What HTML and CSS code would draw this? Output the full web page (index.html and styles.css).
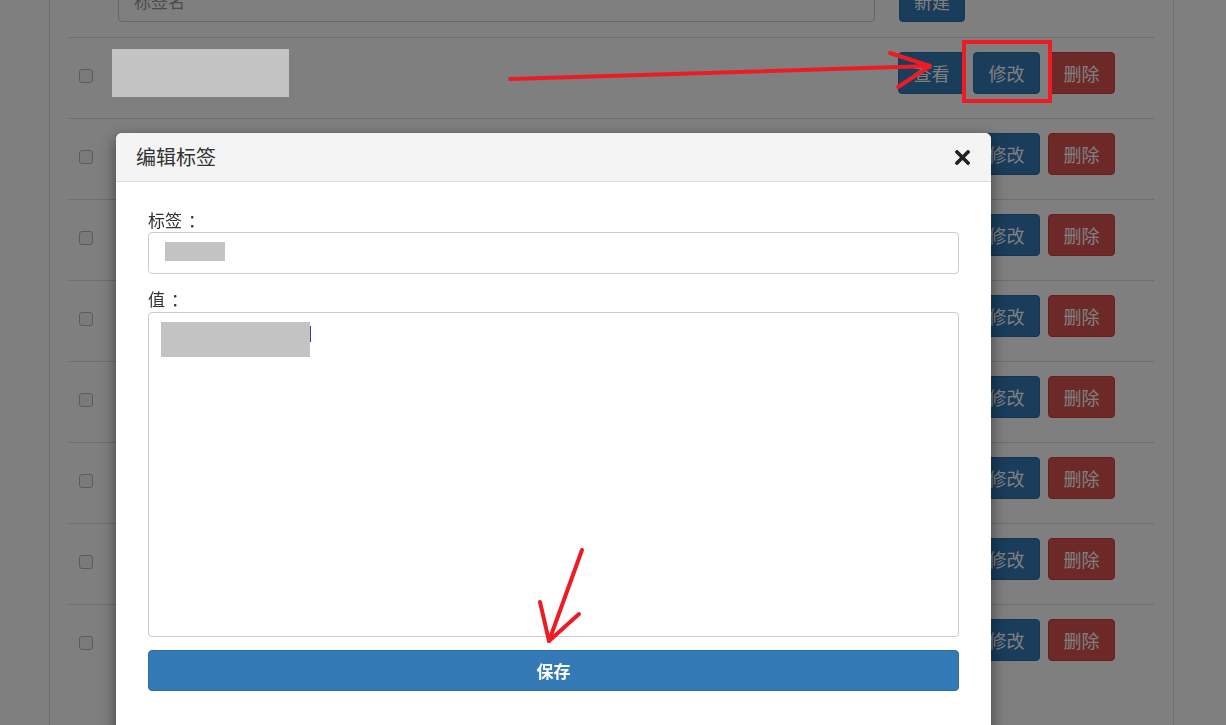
FILE: index.html
```html
<!DOCTYPE html>
<html lang="zh-CN">
<head>
<meta charset="utf-8">
<title>标签管理</title>
<link rel="stylesheet" href="styles.css">
</head>
<body>
<div class="panel">
  <div class="toolbar">
    <div class="search">标签名</div>
    <button class="btn btn-primary">新建</button>
  </div>
  <div class="row"><input type="checkbox" class="check"><div class="name"></div><div class="actions"><button class="btn btn-primary">查看</button><button class="btn btn-primary">修改</button><button class="btn btn-danger">删除</button></div></div>
  <div class="row"><input type="checkbox" class="check"><div class="name"></div><div class="actions"><button class="btn btn-primary">查看</button><button class="btn btn-primary">修改</button><button class="btn btn-danger">删除</button></div></div>
  <div class="row"><input type="checkbox" class="check"><div class="name"></div><div class="actions"><button class="btn btn-primary">查看</button><button class="btn btn-primary">修改</button><button class="btn btn-danger">删除</button></div></div>
  <div class="row"><input type="checkbox" class="check"><div class="name"></div><div class="actions"><button class="btn btn-primary">查看</button><button class="btn btn-primary">修改</button><button class="btn btn-danger">删除</button></div></div>
  <div class="row"><input type="checkbox" class="check"><div class="name"></div><div class="actions"><button class="btn btn-primary">查看</button><button class="btn btn-primary">修改</button><button class="btn btn-danger">删除</button></div></div>
  <div class="row"><input type="checkbox" class="check"><div class="name"></div><div class="actions"><button class="btn btn-primary">查看</button><button class="btn btn-primary">修改</button><button class="btn btn-danger">删除</button></div></div>
  <div class="row"><input type="checkbox" class="check"><div class="name"></div><div class="actions"><button class="btn btn-primary">查看</button><button class="btn btn-primary">修改</button><button class="btn btn-danger">删除</button></div></div>
  <div class="row"><input type="checkbox" class="check"><div class="name"></div><div class="actions"><button class="btn btn-primary">查看</button><button class="btn btn-primary">修改</button><button class="btn btn-danger">删除</button></div></div>
</div>

<div class="backdrop"></div>
<div class="redact-row"></div>

<div class="modal">
  <div class="modal-header">
    <h4 class="modal-title">编辑标签</h4>
    <svg class="close" width="15" height="15" viewBox="0 0 15 15"><path d="M2 2 L13 13 M13 2 L2 13" stroke="#222" stroke-width="3.6" stroke-linecap="square"/></svg>
  </div>
  <div class="modal-body">
    <label class="label">标签<span class="colon">：</span></label>
    <div class="field"><span class="redact redact-small"></span></div>
    <label class="label label-gap">值<span class="colon">：</span></label>
    <div class="field textarea"><span class="redact redact-value"></span><span class="caret"></span></div>
    <button class="save">保存</button>
  </div>
</div>

<svg class="annotations" width="1226" height="725" viewBox="0 0 1226 725">
  <g stroke="#ed1c24" stroke-width="4" fill="none" stroke-linecap="round" stroke-linejoin="round">
    <path d="M510 79 L930 66"/>
    <path d="M890 53 L930 66 L898 87"/>
    <rect x="964" y="42" width="86" height="59" stroke-linecap="butt" stroke-linejoin="miter"/>
    <path d="M582 550 L549 641"/>
    <path d="M540 602 L549 641 L579 614"/>
  </g>
</svg>
</body>
</html>
```

FILE: styles.css
```css
html, body {
  margin: 0;
  padding: 0;
}

body {
  background: #fff;
  color: #333;
  font-family: "Noto Sans CJK SC", "Noto Sans", sans-serif;
  height: 725px;
  overflow: hidden;
  position: relative;
}

.panel {
  box-sizing: border-box;
  width: 1125px;
  min-height: 760px;
  margin-left: 49px;
  padding: 0 19px;
  border-left: 1px solid #ddd;
  border-right: 1px solid #ddd;
}

.toolbar {
  display: flex;
  align-items: flex-end;
  gap: 24px;
  margin-top: -20px;
  padding: 0 0 15px 49px;
}

.search {
  box-sizing: border-box;
  width: 757px;
  height: 42px;
  padding: 0 15px;
  border: 1px solid #ccc;
  border-radius: 4px;
  font-size: 17px;
  line-height: 40px;
  color: #999;
}

.btn {
  font-family: "Noto Sans CJK SC", "Noto Sans", sans-serif;
  font-size: 18px;
  line-height: 24px;
  padding: 8px 14px;
  border: 1px solid transparent;
  border-radius: 4px;
  color: #fff;
  cursor: pointer;
}

.actions .btn {
  padding: 8px 14.5px;
}

.btn-primary {
  background: #337ab7;
  border-color: #2e6da4;
}

.btn-danger {
  background: #d9534f;
  border-color: #d43f3a;
}

.row {
  display: flex;
  align-items: flex-start;
  height: 80px;
  border-top: 1px solid #ddd;
}

.check {
  appearance: none;
  -webkit-appearance: none;
  box-sizing: border-box;
  width: 14px;
  height: 14px;
  margin: 31px 0 0 10px;
  background: #f4f4f4;
  border: 1px solid #b8b8b8;
  border-radius: 3px;
}

.name {
  width: 177px;
  margin-left: 19px;
}

.actions {
  display: flex;
  gap: 8px;
  margin: 14px 39px 0 auto;
}

.backdrop {
  position: fixed;
  inset: 0;
  background: rgba(0, 0, 0, 0.5);
}

.redact-row {
  position: absolute;
  left: 112px;
  top: 49px;
  width: 177px;
  height: 48px;
  background: #c3c3c3;
}

.modal {
  position: absolute;
  left: 116px;
  top: 133px;
  width: 875px;
  height: 640px;
  background: #fff;
  border-radius: 6px 6px 0 0;
  box-shadow: 0 5px 15px rgba(0, 0, 0, 0.5);
}

.modal-header {
  display: flex;
  align-items: center;
  justify-content: space-between;
  height: 48px;
  padding: 0 21px 0 20px;
  background: #f4f4f4;
  border-bottom: 1px solid #ddd;
  border-radius: 6px 6px 0 0;
}

.modal-title {
  margin: 0;
  font-size: 20px;
  font-weight: normal;
  color: #333;
  line-height: 28px;
}

.close {
  display: block;
}

.modal-body {
  padding: 26px 32px 30px;
}

.label {
  display: block;
  font-size: 17px;
  line-height: 24px;
  color: #333;
}

.colon {
  padding-left: 6px;
}

.label-gap {
  margin-top: 13px;
}

.field {
  box-sizing: border-box;
  height: 42px;
  padding: 9px 0 0 16px;
  border: 1px solid #ccc;
  border-radius: 4px;
}

.redact {
  display: block;
  background: #c3c3c3;
}

.redact-small {
  width: 60px;
  height: 19px;
}

.textarea {
  display: flex;
  align-items: flex-start;
  height: 325px;
  margin-top: 1px;
  padding: 9px 12px;
}

.redact-value {
  width: 149px;
  height: 35px;
}

.caret {
  display: block;
  width: 1px;
  height: 16px;
  margin-top: 4px;
  background: #3b3bb0;
}

.save {
  display: block;
  box-sizing: border-box;
  width: 100%;
  height: 41px;
  margin-top: 13px;
  background: #337ab7;
  border: 1px solid #2e6da4;
  border-radius: 4px;
  color: #fff;
  font-family: "Noto Sans CJK SC", "Noto Sans", sans-serif;
  font-size: 17px;
  font-weight: bold;
}

.annotations {
  position: absolute;
  left: 0;
  top: 0;
  pointer-events: none;
}
```
